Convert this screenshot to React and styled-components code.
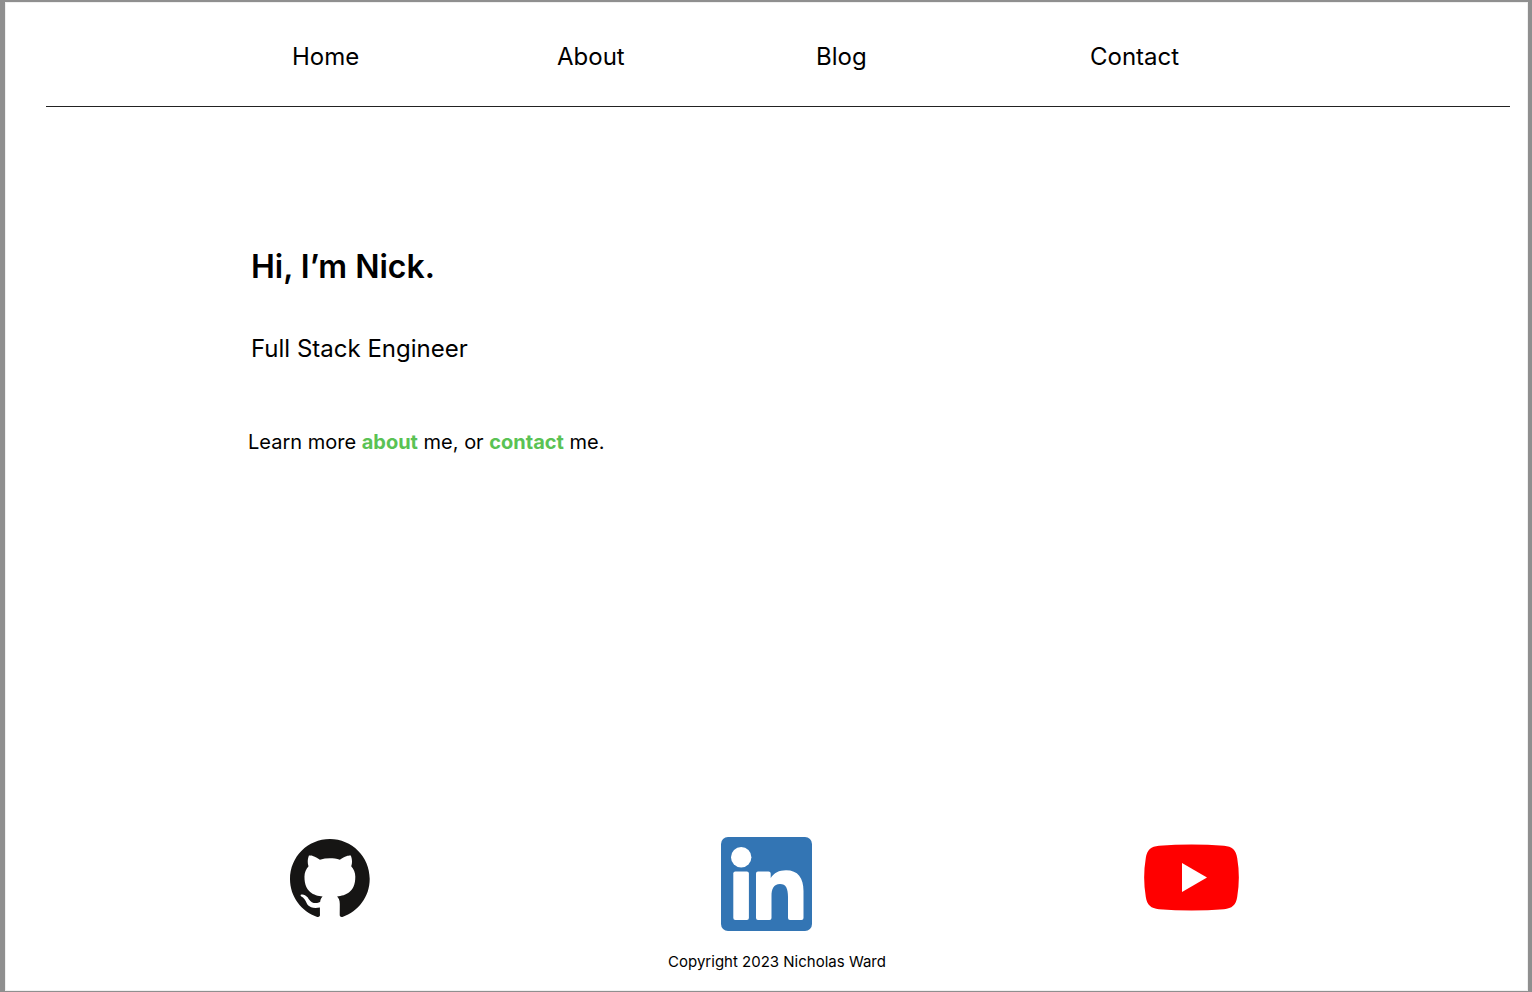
import React from "react";
import styled, { createGlobalStyle } from "styled-components";

const GlobalStyle = createGlobalStyle`
  *, *::before, *::after { box-sizing: border-box; }
  body { margin: 0; background: #8f8f8f; color: #000; font-family: Inter, "Liberation Sans", sans-serif; }
`;
const Page = styled.div`
  display: flex;
  flex-direction: column;
  min-height: 100vh;
  background: #fff;
  border: solid #8f8f8f;
  border-width: 2px 4px 1px 5px;
  box-shadow: inset 0 0 0 1px #f0f0f0;
`;
const Header = styled.header`
  margin: 0 18px 0 41px;
  padding: 39px 0 33px;
  border-bottom: 1px solid #222;
`;
const Nav = styled.nav`
  display: grid;
  grid-template-columns: 265fr 259fr 274fr 420fr;
  padding-left: 246px;
`;
const NavLink = styled.a`
  color: inherit;
  font-size: 24px;
  line-height: 32px;
  text-decoration: none;
`;
const Main = styled.main`
  flex: 1;
  padding: 140px 246px 0;
`;
const Title = styled.h1`
  margin: 0 0 46px;
  font-size: 32px;
  font-weight: 600;
  line-height: 40px;
`;
const Role = styled.p`
  margin: 0 0 63px;
  font-size: 24px;
  line-height: 32px;
`;
const Intro = styled.p`
  margin: 0 -3px;
  font-size: 20px;
  line-height: 28px;
`;
const InlineLink = styled.a`
  color: #5ac254;
  font-weight: 700;
  text-decoration: none;
`;
const Footer = styled.footer`
  padding: 0 289px 19px 285px;
`;
const Socials = styled.div`
  display: grid;
  grid-template-columns: 431fr 423fr 95px;
  align-items: start;
  justify-items: start;
`;
const SocialLink = styled.a`
  display: flex;
  align-items: center;
  min-height: 81px;
`;
const Copyright = styled.p`
  margin: 21px 0 0 25px;
  font-size: 15px;
  line-height: 20px;
  text-align: center;
`;

const navItems = ["Home", "About", "Blog", "Contact"];

export default function App() {
  return (
    <Page>
      <GlobalStyle />
      <Header>
        <Nav>
          {navItems.map((item) => (
            <NavLink key={item} href={`#${item.toLowerCase()}`}>{item}</NavLink>
          ))}
        </Nav>
      </Header>
      <Main>
        <Title>Hi, I’m Nick.</Title>
        <Role>Full Stack Engineer</Role>
        <Intro>
          Learn more <InlineLink href="#about">about</InlineLink> me, or{" "}
          <InlineLink href="#contact">contact</InlineLink> me.
        </Intro>
      </Main>
      <Footer>
        <Socials>
          <SocialLink href="#github" aria-label="GitHub">
            <svg width="80" height="78" viewBox="0 0 98 96" preserveAspectRatio="none" fill="#161514">
              <path fillRule="evenodd" d="M48.854 0C21.839 0 0 22 0 49.217c0 21.756 13.993 40.172 33.405 46.69 2.427.49 3.316-1.059 3.316-2.362 0-1.141-.08-5.052-.08-9.127-13.59 2.934-16.42-5.867-16.42-5.867-2.184-5.704-5.42-7.17-5.42-7.17-4.448-3.015.324-3.015.324-3.015 4.934.326 7.523 5.052 7.523 5.052 4.367 7.496 11.404 5.378 14.235 4.074.404-3.178 1.699-5.378 3.074-6.6-10.839-1.141-22.243-5.378-22.243-24.283 0-5.378 1.94-9.778 5.014-13.2-.485-1.222-2.184-6.275.486-13.038 0 0 4.125-1.304 13.426 5.052a46.97 46.97 0 0 1 12.214-1.63c4.125 0 8.33.571 12.213 1.63 9.302-6.356 13.427-5.052 13.427-5.052 2.67 6.763.97 11.816.485 13.038 3.155 3.422 5.015 7.822 5.015 13.2 0 18.905-11.404 23.06-22.324 24.283 1.78 1.548 3.316 4.481 3.316 9.126 0 6.6-.08 11.897-.08 13.526 0 1.304.89 2.853 3.316 2.364 19.412-6.52 33.405-24.935 33.405-46.691C97.707 22 75.788 0 48.854 0z" />
            </svg>
          </SocialLink>
          <SocialLink href="#linkedin" aria-label="LinkedIn">
            <svg width="91" height="94" viewBox="0 0 91 94">
              <rect width="91" height="94" rx="7" fill="#3375b4" />
              <g fill="#fff">
                <circle cx="20.2" cy="20.3" r="10.2" />
                <rect x="12.3" y="34.5" width="15.6" height="48.500" rx="2" />
                <path d="M37 34.500H47.500Q49.700 34.500 49.700 36.500V41C53 36 58 33.300 65 33.300C77 33.300 82.500 41 82.500 54V81Q82.500 83 80.500 83H69Q67 83 67 81V60C67 51.500 65 47 59 47C52.500 47 50.500 52 50.500 59V81Q50.500 83 48.500 83H37Q35 83 35 81V36.500Q35 34.500 37 34.500Z" />
              </g>
            </svg>
          </SocialLink>
          <SocialLink href="#youtube" aria-label="YouTube">
            <svg width="95" height="67" viewBox="0 0 95 67">
              <path fill="#f00" d="M15 1.800Q47.500 -.8 80 1.800C88 2.500 92 6 93.200 14Q96.500 33.500 93.200 53C92 61 88 64.500 80 65.200Q47.500 67.800 15 65.200C7 64.500 3 61 1.800 53Q-1.500 33.500 1.800 14C3 6 7 2.500 15 1.800Z" />
              <path fill="#fff" d="M38 19L63 33.500L38 48Z" />
            </svg>
          </SocialLink>
        </Socials>
        <Copyright>Copyright 2023 Nicholas Ward</Copyright>
      </Footer>
    </Page>
  );
}
